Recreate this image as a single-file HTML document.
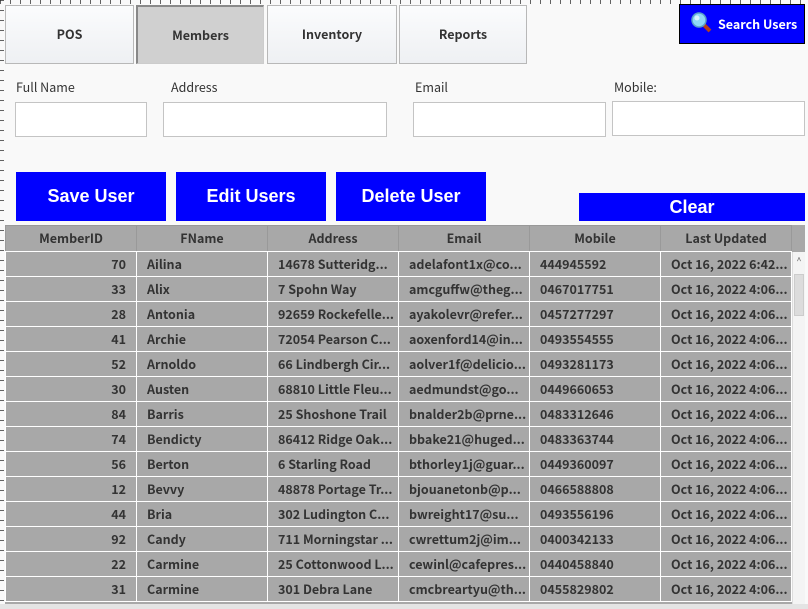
<!DOCTYPE html>
<html><head><meta charset="utf-8"><style>
*{box-sizing:border-box;margin:0;padding:0}
body{width:808px;height:609px;overflow:hidden;background:#f9f9f9;position:relative;font-family:"Noto Sans CJK JP","Liberation Sans",sans-serif}
.abs{position:absolute}
.ruleT{left:0;top:0;width:808px;height:4px;background:repeating-linear-gradient(90deg,#222 0 1px,transparent 1px 10px);opacity:.7}
.ruleL{left:0;top:0;width:4px;height:609px;background:repeating-linear-gradient(180deg,#222 0 1px,transparent 1px 10px);opacity:.7}
.tab{top:5px;height:59px;border:1px solid #b8b8b8;background:linear-gradient(#fbfcfd,#eef0f3);font-weight:bold;font-size:12.5px;color:#333;display:flex;align-items:center;justify-content:center;padding-bottom:2px}
.tab.sel{background:#d0d0d0;border-color:#888 #ccc #ccc #888;border-width:2px 1px 1px 2px}
.lbl{font-size:12.5px;color:#333;top:77px}
.inp{background:#fff;border:1px solid #c4c4c4}
.btn{background:#0000ff;color:#fff;font-family:"Liberation Sans",sans-serif;font-weight:bold;font-size:18px;display:flex;align-items:center;justify-content:center}
table{border-collapse:collapse;table-layout:fixed;font-size:12.5px;font-weight:bold;color:#333}
td,th{height:25px;border:1px solid #fff;background:#a8a8a8;white-space:nowrap;overflow:hidden;padding:0 10px 2px;line-height:21px}
th{background:#a8a8a8;border-color:#999 #999 #fff #999;height:26px;text-align:center}
td.n{text-align:right}
</style></head><body>
<div class="abs ruleT"></div><div class="abs ruleL"></div>
<div class="abs tab" style="left:5px;width:129px">POS</div>
<div class="abs tab sel" style="left:136px;width:128px">Members</div>
<div class="abs tab" style="left:267px;width:130px">Inventory</div>
<div class="abs tab" style="left:399px;width:128px">Reports</div>
<div class="abs" style="left:679px;top:4px;width:126px;height:40px;background:#0000ff;border:1px solid #000;color:#fff;font-weight:bold;font-size:12.5px;display:flex;align-items:center;padding-left:10px;padding-bottom:2px;white-space:nowrap">
<svg width="24" height="24" viewBox="0 0 24 24" style="margin-right:4px;flex:none"><line x1="13" y1="13" x2="20" y2="20" stroke="#b5401a" stroke-width="4"/><circle cx="9" cy="9" r="7" fill="#8fd8f8" stroke="#5aa0c8" stroke-width="1.5"/><circle cx="7" cy="7" r="2.5" fill="#d8f4ff"/></svg>Search Users</div>
<div class="abs lbl" style="left:16px">Full Name</div>
<div class="abs lbl" style="left:171px">Address</div>
<div class="abs lbl" style="left:415px">Email</div>
<div class="abs lbl" style="left:614px">Mobile:</div>
<div class="abs inp" style="left:15px;top:102px;width:132px;height:35px"></div>
<div class="abs inp" style="left:163px;top:102px;width:224px;height:35px"></div>
<div class="abs inp" style="left:413px;top:102px;width:193px;height:35px"></div>
<div class="abs inp" style="left:612px;top:101px;width:193px;height:35px"></div>
<div class="abs btn" style="left:16px;top:172px;width:150px;height:49px">Save User</div>
<div class="abs btn" style="left:176px;top:172px;width:150px;height:49px">Edit Users</div>
<div class="abs btn" style="left:336px;top:172px;width:150px;height:49px">Delete User</div>
<div class="abs btn" style="left:579px;top:193px;width:226px;height:28px">Clear</div>
<div class="abs" style="left:5px;top:225px;width:800px;height:380px;background:#a8a8a8;overflow:hidden">
<table style="width:786px">
<colgroup><col style="width:131px"><col style="width:131px"><col style="width:131px"><col style="width:131px"><col style="width:131px"><col style="width:131px"></colgroup>
<tr><th>MemberID</th><th>FName</th><th>Address</th><th>Email</th><th>Mobile</th><th>Last Updated</th></tr>
<tr><td class="n">70</td><td>Ailina</td><td>14678 Sutteridg...</td><td>adelafont1x@co...</td><td>444945592</td><td>Oct 16, 2022 6:42...</td></tr>
<tr><td class="n">33</td><td>Alix</td><td>7 Spohn Way</td><td>amcguffw@theg...</td><td>0467017751</td><td>Oct 16, 2022 4:06...</td></tr>
<tr><td class="n">28</td><td>Antonia</td><td>92659 Rockefelle...</td><td>ayakolevr@refer...</td><td>0457277297</td><td>Oct 16, 2022 4:06...</td></tr>
<tr><td class="n">41</td><td>Archie</td><td>72054 Pearson C...</td><td>aoxenford14@in...</td><td>0493554555</td><td>Oct 16, 2022 4:06...</td></tr>
<tr><td class="n">52</td><td>Arnoldo</td><td>66 Lindbergh Cir...</td><td>aolver1f@delicio...</td><td>0493281173</td><td>Oct 16, 2022 4:06...</td></tr>
<tr><td class="n">30</td><td>Austen</td><td>68810 Little Fleu...</td><td>aedmundst@go...</td><td>0449660653</td><td>Oct 16, 2022 4:06...</td></tr>
<tr><td class="n">84</td><td>Barris</td><td>25 Shoshone Trail</td><td>bnalder2b@prne...</td><td>0483312646</td><td>Oct 16, 2022 4:06...</td></tr>
<tr><td class="n">74</td><td>Bendicty</td><td>86412 Ridge Oak...</td><td>bbake21@huged...</td><td>0483363744</td><td>Oct 16, 2022 4:06...</td></tr>
<tr><td class="n">56</td><td>Berton</td><td>6 Starling Road</td><td>bthorley1j@guar...</td><td>0449360097</td><td>Oct 16, 2022 4:06...</td></tr>
<tr><td class="n">12</td><td>Bevvy</td><td>48878 Portage Tr...</td><td>bjouanetonb@p...</td><td>0466588808</td><td>Oct 16, 2022 4:06...</td></tr>
<tr><td class="n">44</td><td>Bria</td><td>302 Ludington C...</td><td>bwreight17@su...</td><td>0493556196</td><td>Oct 16, 2022 4:06...</td></tr>
<tr><td class="n">92</td><td>Candy</td><td>711 Morningstar ...</td><td>cwrettum2j@im...</td><td>0400342133</td><td>Oct 16, 2022 4:06...</td></tr>
<tr><td class="n">22</td><td>Carmine</td><td>25 Cottonwood L...</td><td>cewinl@cafepres...</td><td>0440458840</td><td>Oct 16, 2022 4:06...</td></tr>
<tr><td class="n">31</td><td>Carmine</td><td>301 Debra Lane</td><td>cmcbreartyu@th...</td><td>0455829802</td><td>Oct 16, 2022 4:06...</td></tr>
</table>
<div class="abs" style="left:787px;top:27px;width:13px;height:353px;background:#f4f4f4;border-left:1px solid #ddd">
<div style="text-align:center;font-size:9px;color:#666;margin-top:2px">^</div>
<div class="abs" style="left:1px;top:22px;width:10px;height:42px;background:#dcdcdc;border:1px solid #ccc"></div>
</div>
</div>
<div class="abs" style="left:0;top:604px;width:808px;height:5px;background:#e4e4e4"></div>
</body></html>
